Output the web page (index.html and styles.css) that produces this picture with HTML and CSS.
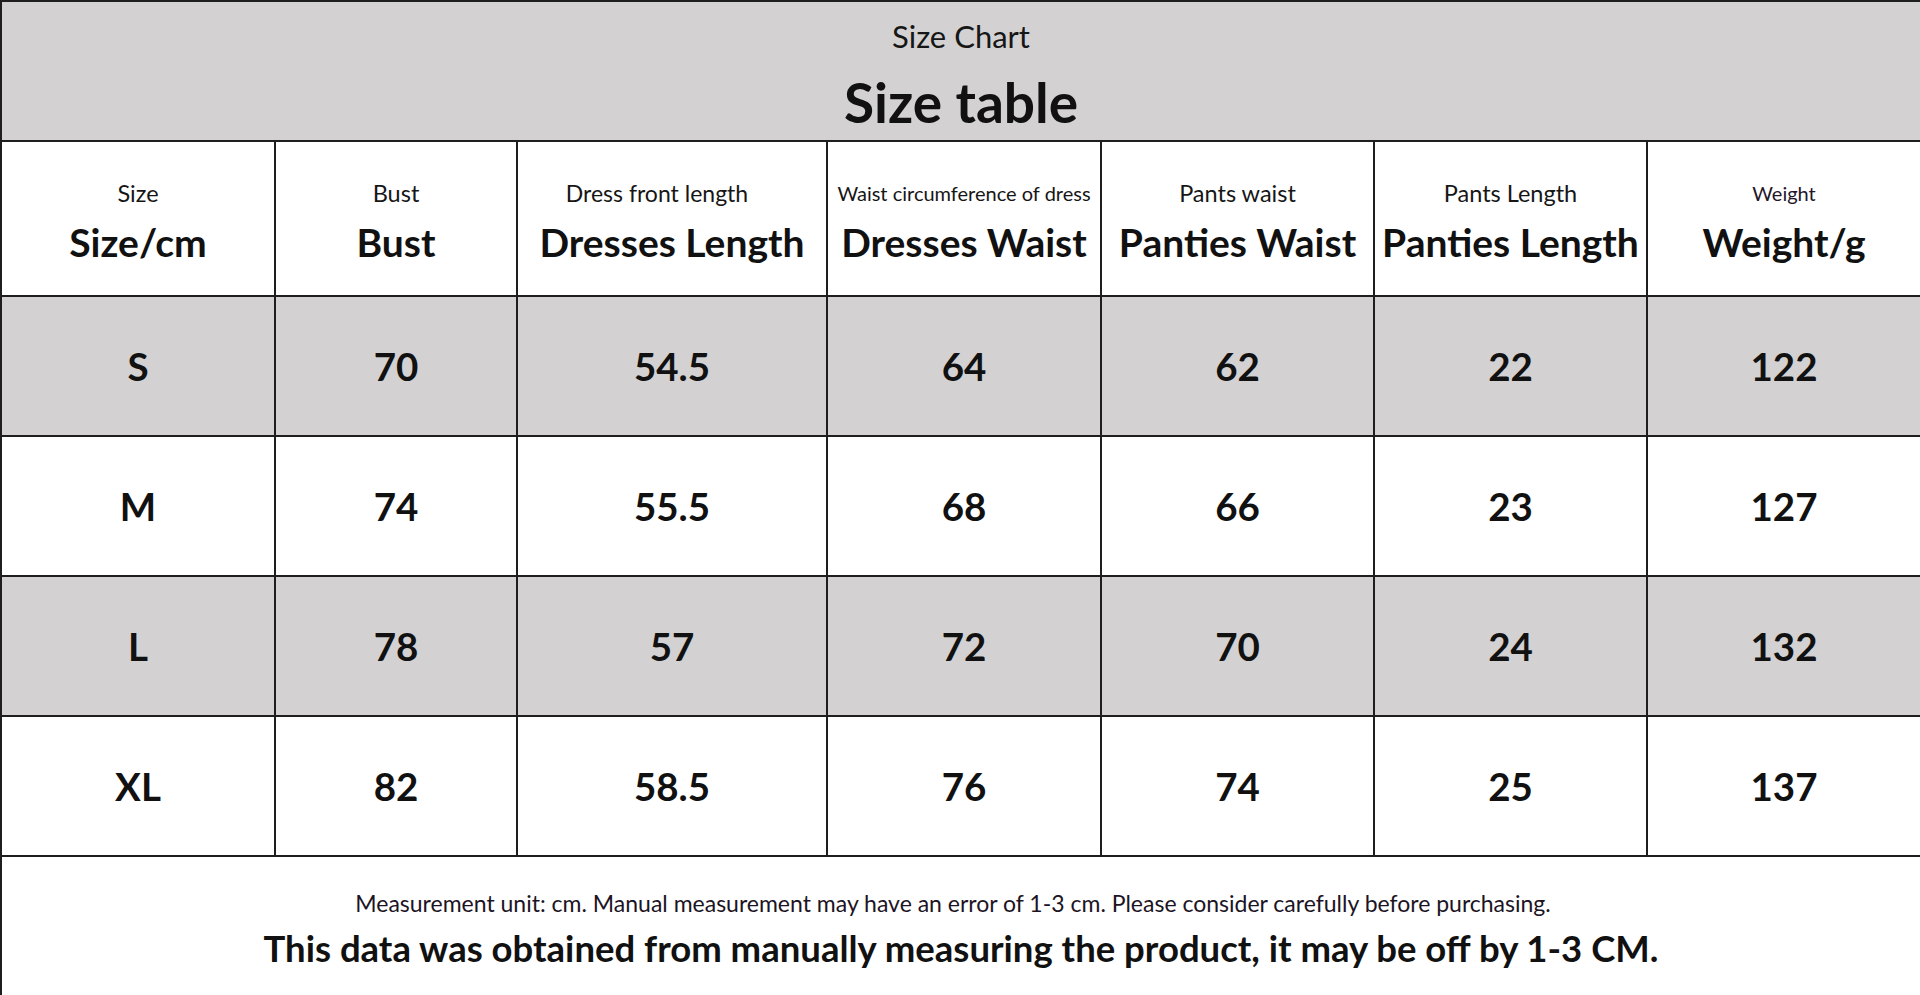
FILE: index.html
```html
<!DOCTYPE html>
<html lang="en">
<head>
<meta charset="utf-8">
<title>Size Chart</title>
<link rel="stylesheet" href="styles.css">
</head>
<body>
<table class="chart">
  <colgroup>
    <col class="c1"><col class="c2"><col class="c3"><col class="c4"><col class="c5"><col class="c6"><col class="c7">
  </colgroup>
  <tr class="title-row">
    <td colspan="7">
      <div class="title-small">Size Chart</div>
      <div class="title-big">Size table</div>
    </td>
  </tr>
  <tr class="head-row">
    <td><div class="lab">Size</div><div class="big">Size/cm</div></td>
    <td><div class="lab">Bust</div><div class="big">Bust</div></td>
    <td><div class="lab lab-left">Dress front length</div><div class="big">Dresses Length</div></td>
    <td><div class="lab lab-sm">Waist circumference of dress</div><div class="big">Dresses Waist</div></td>
    <td><div class="lab">Pants waist</div><div class="big">Panties Waist</div></td>
    <td><div class="lab">Pants Length</div><div class="big">Panties Length</div></td>
    <td><div class="lab lab-xs">Weight</div><div class="big">Weight/g</div></td>
  </tr>
  <tr class="data-row grey">
    <td>S</td><td>70</td><td>54.5</td><td>64</td><td>62</td><td>22</td><td>122</td>
  </tr>
  <tr class="data-row">
    <td>M</td><td>74</td><td>55.5</td><td>68</td><td>66</td><td>23</td><td>127</td>
  </tr>
  <tr class="data-row grey">
    <td>L</td><td>78</td><td>57</td><td>72</td><td>70</td><td>24</td><td>132</td>
  </tr>
  <tr class="data-row">
    <td>XL</td><td>82</td><td>58.5</td><td>76</td><td>74</td><td>25</td><td>137</td>
  </tr>
  <tr class="foot-row">
    <td colspan="7">
      <div class="note">Measurement unit: cm. Manual measurement may have an error of 1-3 cm. Please consider carefully before purchasing.</div>
      <div class="note-big">This data was obtained from manually measuring the product, it may be off by 1-3 CM.</div>
    </td>
  </tr>
</table>
</body>
</html>
```
FILE: styles.css
```css
html, body {
  margin: 0;
  padding: 0;
  background: #ffffff;
}
body {
  font-family: Lato, "Noto Sans", sans-serif;
  color: #111111;
}
.chart {
  width: 1920px;
  height: 995px;
  border-collapse: collapse;
  table-layout: fixed;
  box-sizing: border-box;
}
.chart td {
  border: 2px solid #1e1e1e;
  text-align: center;
  vertical-align: middle;
  padding: 0;
}
.c1 { width: 274px; }
.c2 { width: 242px; }
.c3 { width: 310px; }
.c4 { width: 274px; }
.c5 { width: 273px; }
.c6 { width: 273px; }
.c7 { width: 274px; }

.title-row { height: 140px; }
.title-row td {
  background: #d3d1d2;
  vertical-align: top;
  padding-top: 16px;
}
.title-small {
  font-size: 31px;
  line-height: 36px;
  color: #161616;
}
.title-big {
  font-size: 55px;
  font-weight: 700;
  line-height: 60px;
  margin-top: 18px;
}

.head-row { height: 155px; }
.head-row td { padding-top: 6px; }
.lab {
  font-size: 23.5px;
  line-height: 28px;
  color: #161616;
}
.lab-left {
  font-size: 23px;
  padding-right: 30px;
}
.lab-sm { font-size: 20px; }
.lab-xs { font-size: 20px; color: #241628; }
.big {
  font-size: 39px;
  font-weight: 700;
  line-height: 46px;
  margin-top: 12px;
}

.data-row { height: 140px; }
.data-row td {
  font-size: 38.5px;
  font-weight: 700;
}
.data-row.grey td { background: #d3d1d2; }

.foot-row { height: 140px; }
.foot-row td { padding-top: 5px; }
.note {
  font-size: 23px;
  line-height: 30px;
  color: #1c1424;
  padding-right: 16px;
}
.note-big {
  font-size: 36.5px;
  font-weight: 700;
  line-height: 44px;
  margin-top: 8px;
}
```
